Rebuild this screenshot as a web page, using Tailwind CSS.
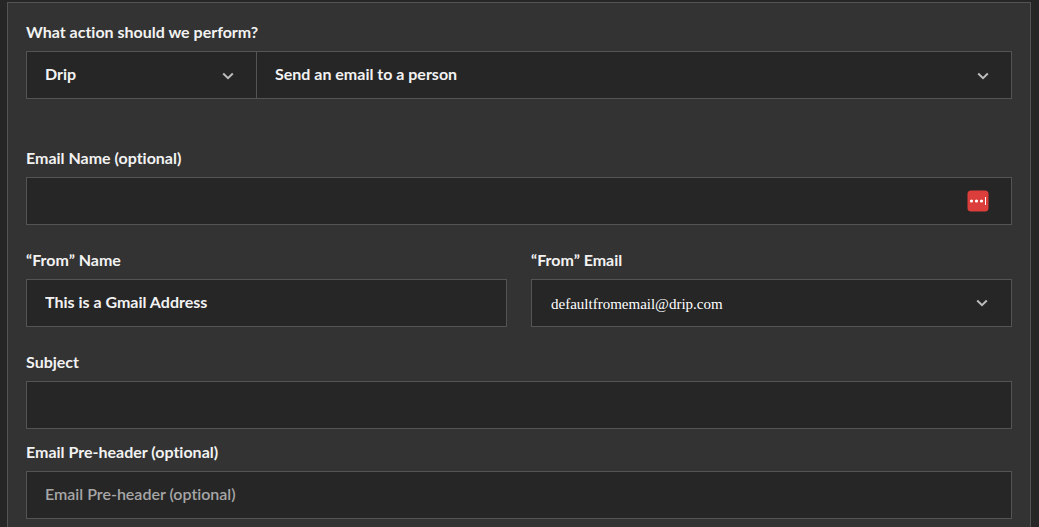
<!DOCTYPE html>
<html lang="en">
<head>
<meta charset="UTF-8">
<meta name="viewport" content="width=device-width, initial-scale=1.0">
<title>Send an email to a person</title>
<script src="https://cdn.jsdelivr.net/npm/@tailwindcss/browser@4"></script>
</head>
<body class="flex min-h-screen flex-col bg-[#262626] pt-0.5 pr-2 pl-[7px] font-['Lato','Open_Sans',sans-serif] text-base font-bold text-[#f2f2f2] [font-variant-ligatures:none]">

<form class="grow border border-b-0 border-[#545454] bg-[#333333] px-[18px] pt-[18px] pb-2">

    <!-- Action -->
    <label for="app" class="mb-2 block leading-[22px]">What action should we perform?</label>
    <div class="mb-12 flex">
        <div class="relative w-[231px]">
            <select id="app" class="h-12 w-full appearance-none border border-[#545454] bg-[#262626] px-[18px] pb-0.5 outline-none">
                <option>Drip</option>
            </select>
            <svg class="pointer-events-none absolute top-5 right-[23px] h-2.5 w-3" viewBox="0 0 12 10" fill="none" stroke="#bdbdbd" stroke-width="2"><path d="M1.2 2.5 6 7.1l4.8-4.6"/></svg>
        </div>
        <div class="relative grow">
            <select aria-label="Action" class="h-12 w-full appearance-none border border-l-0 border-[#545454] bg-[#262626] px-[18px] pb-0.5 outline-none">
                <option>Send an email to a person</option>
            </select>
            <svg class="pointer-events-none absolute top-5 right-[23px] h-2.5 w-3" viewBox="0 0 12 10" fill="none" stroke="#bdbdbd" stroke-width="2"><path d="M1.2 2.5 6 7.1l4.8-4.6"/></svg>
        </div>
    </div>

    <!-- Email name -->
    <label for="email-name" class="mb-2 block leading-[22px]">Email Name (optional)</label>
    <div class="relative mb-6">
        <input id="email-name" type="text" class="block h-12 w-full border border-[#545454] bg-[#262626] px-[18px] pb-1 outline-none">
        <button type="button" aria-label="Fill from password manager" class="absolute top-[13px] right-[23px]">
            <svg class="block h-[22px] w-[22px]" viewBox="0 0 22 22">
                <rect x="0.5" y="0.5" width="21" height="21" rx="3.5" fill="#dc3f3b"/>
                <circle cx="4.5" cy="11" r="1.6" fill="#fff"/>
                <circle cx="9.5" cy="11" r="1.6" fill="#fff"/>
                <circle cx="14.5" cy="11" r="1.6" fill="#fff"/>
                <rect x="18" y="7" width="1" height="8" fill="#fff"/>
            </svg>
        </button>
    </div>

    <!-- Sender -->
    <div class="mb-6 grid grid-cols-2 gap-6">
        <div>
            <label for="from-name" class="mb-2 block leading-[22px]">“From” Name</label>
            <input id="from-name" type="text" value="This is a Gmail Address" class="block h-12 w-full border border-[#545454] bg-[#262626] px-[18px] pb-1 outline-none">
        </div>
        <div>
            <label for="from-email" class="mb-2 block leading-[22px]">“From” Email</label>
            <div class="relative">
                <select id="from-email" class="block h-12 w-full appearance-none border border-[#545454] bg-[#262626] px-[19px] pt-0.5 font-['Liberation_Serif',serif] text-[15px] font-normal text-white outline-none">
                    <option>defaultfromemail@drip.com</option>
                </select>
                <svg class="pointer-events-none absolute top-[19px] right-6 h-2.5 w-3" viewBox="0 0 12 10" fill="none" stroke="#bdbdbd" stroke-width="2"><path d="M1.2 2.5 6 7.1l4.8-4.6"/></svg>
            </div>
        </div>
    </div>

    <!-- Subject -->
    <label for="subject" class="mb-2 block leading-[22px]">Subject</label>
    <input id="subject" type="text" class="mb-3 block h-12 w-full border border-[#545454] bg-[#262626] px-[18px] pb-1 outline-none">

    <!-- Pre-header -->
    <label for="preheader" class="mb-2 block leading-[22px]">Email Pre-header (optional)</label>
    <input id="preheader" type="text" placeholder="Email Pre-header (optional)" class="block h-12 w-full border border-[#545454] bg-[#262626] px-[18px] pb-1 outline-none placeholder:font-semibold placeholder:text-[#a6a6a6]">

</form>

</body>
</html>
